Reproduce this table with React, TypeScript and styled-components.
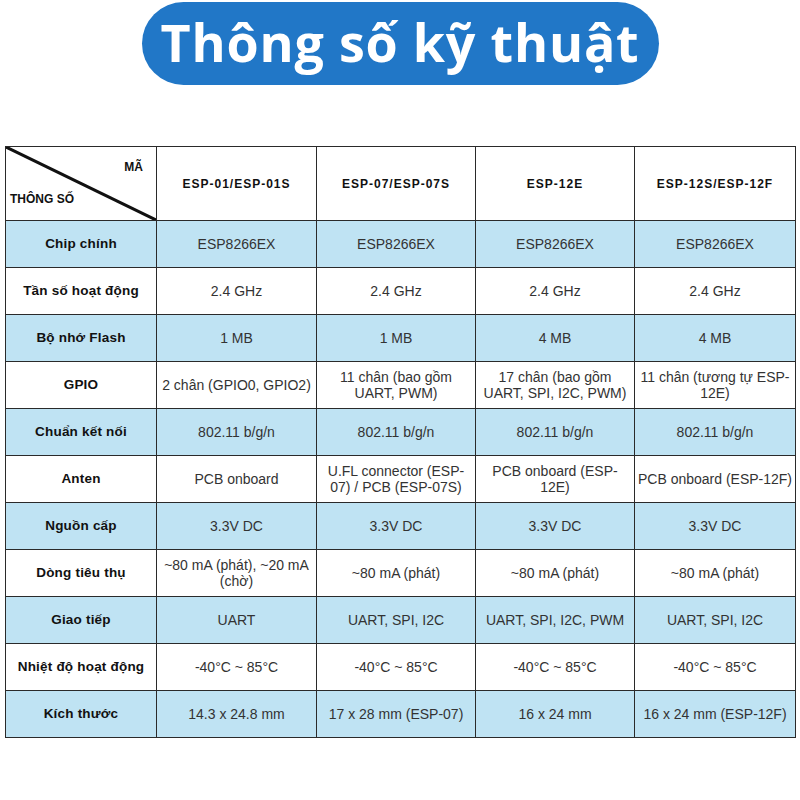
import React from "react";
import styled, { createGlobalStyle } from "styled-components";

const GlobalStyle = createGlobalStyle`
  html, body {
    margin: 0;
    padding: 0;
    background: #ffffff;
  }
  body {
    font-family: "Liberation Sans", Arial, sans-serif;
  }
`;

const columns = ["ESP-01/ESP-01S", "ESP-07/ESP-07S", "ESP-12E", "ESP-12S/ESP-12F"];

const rows: { label: string; values: string[] }[] = [
  { label: "Chip chính", values: ["ESP8266EX", "ESP8266EX", "ESP8266EX", "ESP8266EX"] },
  { label: "Tần số hoạt động", values: ["2.4 GHz", "2.4 GHz", "2.4 GHz", "2.4 GHz"] },
  { label: "Bộ nhớ Flash", values: ["1 MB", "1 MB", "4 MB", "4 MB"] },
  {
    label: "GPIO",
    values: [
      "2 chân (GPIO0, GPIO2)",
      "11 chân (bao gồm UART, PWM)",
      "17 chân (bao gồm UART, SPI, I2C, PWM)",
      "11 chân (tương tự ESP-12E)",
    ],
  },
  { label: "Chuẩn kết nối", values: ["802.11 b/g/n", "802.11 b/g/n", "802.11 b/g/n", "802.11 b/g/n"] },
  {
    label: "Anten",
    values: [
      "PCB onboard",
      "U.FL connector (ESP-07) / PCB (ESP-07S)",
      "PCB onboard (ESP-12E)",
      "PCB onboard (ESP-12F)",
    ],
  },
  { label: "Nguồn cấp", values: ["3.3V DC", "3.3V DC", "3.3V DC", "3.3V DC"] },
  {
    label: "Dòng tiêu thụ",
    values: ["~80 mA (phát), ~20 mA (chờ)", "~80 mA (phát)", "~80 mA (phát)", "~80 mA (phát)"],
  },
  { label: "Giao tiếp", values: ["UART", "UART, SPI, I2C", "UART, SPI, I2C, PWM", "UART, SPI, I2C"] },
  {
    label: "Nhiệt độ hoạt động",
    values: ["-40°C ~ 85°C", "-40°C ~ 85°C", "-40°C ~ 85°C", "-40°C ~ 85°C"],
  },
  {
    label: "Kích thước",
    values: ["14.3 x 24.8 mm", "17 x 28 mm (ESP-07)", "16 x 24 mm", "16 x 24 mm (ESP-12F)"],
  },
];

const widths = [151, 160, 159, 159, 161];

const App = () => {
  return (
    <Page>
      <GlobalStyle />
      <TitleBar>
        <TitlePill>Thông số kỹ thuật</TitlePill>
      </TitleBar>
      <SpecTable>
        <colgroup>
          {widths.map((w, i) => (
            <col key={i} style={{ width: w }} />
          ))}
        </colgroup>
        <thead>
          <tr>
            <CornerCell>
              <Diagonal viewBox="0 0 100 100" preserveAspectRatio="none">
                <line x1="0" y1="0" x2="100" y2="100" stroke="#111" strokeWidth="3" vectorEffect="non-scaling-stroke" />
              </Diagonal>
              <CornerTop>MÃ</CornerTop>
              <CornerBottom>THÔNG SỐ</CornerBottom>
            </CornerCell>
            {columns.map((c) => (
              <HeadCell key={c}>{c}</HeadCell>
            ))}
          </tr>
        </thead>
        <tbody>
          {rows.map((r, i) => (
            <Row key={r.label} $shaded={i % 2 === 0}>
              <LabelCell>{r.label}</LabelCell>
              {r.values.map((v, j) => (
                <ValueCell key={j}>{v}</ValueCell>
              ))}
            </Row>
          ))}
        </tbody>
      </SpecTable>
    </Page>
  );
};

export default App;

const Page = styled.div`
  width: 800px;
  height: 800px;
  background: #ffffff;
  padding-top: 2px;
  box-sizing: border-box;
`;

const TitleBar = styled.div`
  display: flex;
  justify-content: center;
`;

const TitlePill = styled.div`
  width: 517px;
  height: 83px;
  border-radius: 42px;
  background: #2177c7;
  color: #ffffff;
  display: flex;
  align-items: center;
  justify-content: center;
  font-family: "Open Sans", "Noto Sans", sans-serif;
  font-weight: 700;
  font-size: 52px;
  letter-spacing: 0.8px;
  padding-bottom: 4px;
  box-sizing: border-box;
`;

const SpecTable = styled.table`
  margin: 61px 0 0 5px;
  width: 790px;
  border-collapse: collapse;
  table-layout: fixed;
  font-family: "Liberation Sans", Arial, sans-serif;
  font-size: 14px;
  color: #333333;

  td,
  th {
    border: 1px solid #2a2a2a;
    text-align: center;
    vertical-align: middle;
    padding: 0 2px;
    line-height: 16px;
  }
`;

const CornerCell = styled.th`
  position: relative;
  height: 73px;
  padding: 0;
`;

const Diagonal = styled.svg`
  position: absolute;
  inset: 0;
  width: 100%;
  height: 100%;
`;

const CornerTop = styled.span`
  position: absolute;
  top: 12px;
  right: 13px;
  font-size: 12px;
  font-weight: 700;
  color: #111;
`;

const CornerBottom = styled.span`
  position: absolute;
  bottom: 13px;
  left: 4px;
  font-size: 12px;
  font-weight: 700;
  color: #111;
`;

const HeadCell = styled.th`
  height: 73px;
  font-size: 12px;
  font-weight: 700;
  letter-spacing: 1px;
  color: #111;
`;

const Row = styled.tr<{ $shaded: boolean }>`
  height: 47px;
  background: ${(p) => (p.$shaded ? "#bfe3f3" : "#ffffff")};
`;

const LabelCell = styled.td`
  font-size: 13.5px;
  font-weight: 700;
  color: #111;
  letter-spacing: 0.2px;
`;

const ValueCell = styled.td`
  color: #333;
`;
